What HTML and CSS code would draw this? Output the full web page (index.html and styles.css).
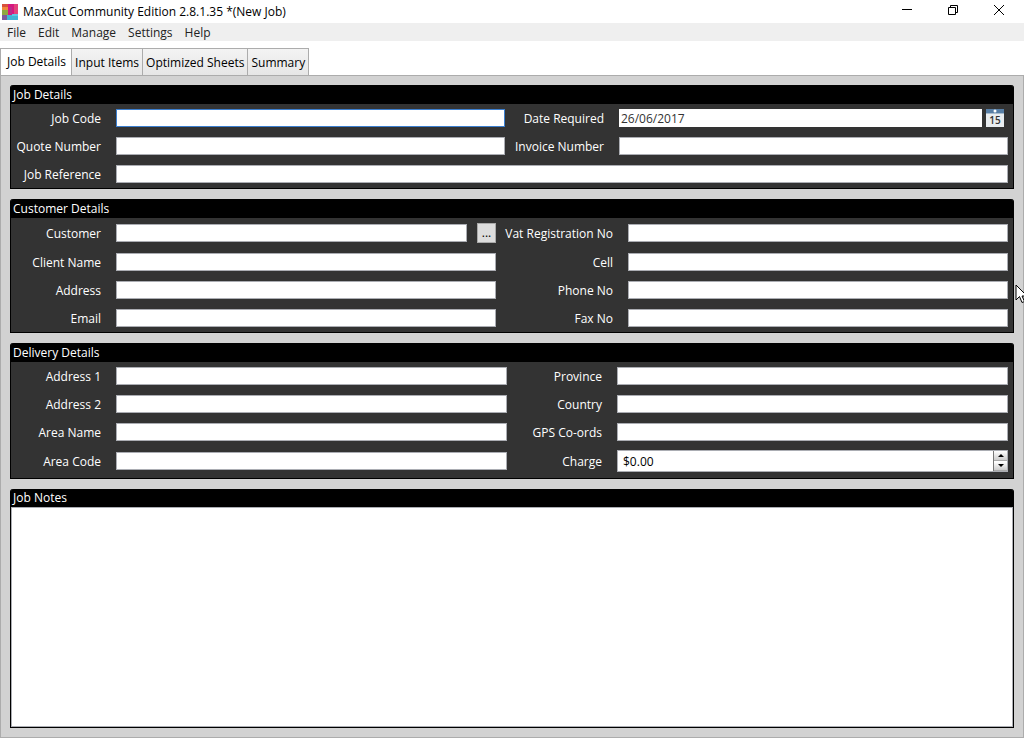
FILE: index.html
```html
<!DOCTYPE html>
<html lang="en">
<head>
  <meta charset="UTF-8">
  <meta name="viewport" content="width=device-width, initial-scale=1.0">
  <title>MaxCut Community Edition</title>
  <link rel="stylesheet" href="styles.css">
</head>
<body>
  <header class="titlebar">
    <svg class="logo" width="16" height="16" viewBox="0 0 16 16">
      <rect width="16" height="16" fill="#d8402f"/>
      <rect width="7" height="3" fill="#d9503c"/>
      <rect y="3" width="7" height="3" fill="#f08a3c"/>
      <rect x="6" width="6" height="11" fill="#d6187f"/>
      <rect x="8" y="3" width="2" height="7" fill="#b5308c"/>
      <rect x="12" width="4" height="10" fill="#e2447c"/>
      <rect y="6" width="6" height="5" fill="#8fa83f"/>
      <rect y="11" width="5" height="5" fill="#7c5a9c"/>
      <rect x="5" y="11" width="11" height="5" fill="#3fb6d6"/>
      <rect x="10" y="10" width="6" height="2" fill="#5fc8e4"/>
    </svg>
    <span class="title">MaxCut Community Edition 2.8.1.35 *(New Job)</span>
    <div class="window-buttons">
      <button aria-label="Minimize"><svg width="12" height="12"><path d="M1 5.500h10" stroke="#000"/></svg></button>
      <button aria-label="Restore"><svg width="12" height="12" fill="none" stroke="#000"><path d="M1.500 3.500h7v7h-7zM3.500 3.500v-2h7v7h-2"/></svg></button>
      <button aria-label="Close"><svg width="12" height="12"><path d="M1 1l10 10M11 1L1 11" stroke="#000"/></svg></button>
    </div>
  </header>

  <nav class="menubar">
    <button>File</button>
    <button>Edit</button>
    <button>Manage</button>
    <button>Settings</button>
    <button>Help</button>
  </nav>

  <div class="tabs" role="tablist">
    <button class="tab active" role="tab" aria-selected="true">Job Details</button>
    <button class="tab" role="tab">Input Items</button>
    <button class="tab" role="tab">Optimized Sheets</button>
    <button class="tab" role="tab">Summary</button>
  </div>

  <main class="content">
    <section class="panel">
      <h2>Job Details</h2>
      <div class="fields job">
        <label for="jobCode">Job Code</label>
        <input type="text" id="jobCode" class="focused">
        <label for="dateRequired">Date Required</label>
        <div class="date">
          <input type="text" id="dateRequired" value="26/06/2017">
          <button class="calendar" aria-label="Pick a date">
            <svg width="20" height="18" viewBox="0 0 20 18">
              <rect x="1" width="18" height="18" fill="#e9edf0"/>
              <rect x="1" width="18" height="4" fill="#587fa6"/>
              <rect x="1" y="4" width="18" height="1" fill="#a9bccd"/>
              <circle cx="10" cy="2" r="1.500" fill="#fff"/>
              <text x="10" y="15" text-anchor="middle">15</text>
            </svg>
          </button>
        </div>
        <label for="quoteNumber">Quote Number</label>
        <input type="text" id="quoteNumber">
        <label for="invoiceNumber">Invoice Number</label>
        <input type="text" id="invoiceNumber">
        <label for="jobReference">Job Reference</label>
        <input type="text" id="jobReference" class="wide">
      </div>
    </section>

    <section class="panel">
      <h2>Customer Details</h2>
      <div class="fields customer">
        <label for="customer">Customer</label>
        <div class="lookup">
          <input type="text" id="customer">
          <button class="browse">...</button>
        </div>
        <label for="vatNo">Vat Registration No</label>
        <input type="text" id="vatNo">
        <label for="clientName">Client Name</label>
        <input type="text" id="clientName">
        <label for="cell">Cell</label>
        <input type="text" id="cell">
        <label for="address">Address</label>
        <input type="text" id="address">
        <label for="phoneNo">Phone No</label>
        <input type="text" id="phoneNo">
        <label for="email">Email</label>
        <input type="text" id="email">
        <label for="faxNo">Fax No</label>
        <input type="text" id="faxNo">
      </div>
    </section>

    <section class="panel">
      <h2>Delivery Details</h2>
      <div class="fields delivery">
        <label for="address1">Address 1</label>
        <input type="text" id="address1">
        <label for="province">Province</label>
        <input type="text" id="province">
        <label for="address2">Address 2</label>
        <input type="text" id="address2">
        <label for="country">Country</label>
        <input type="text" id="country">
        <label for="areaName">Area Name</label>
        <input type="text" id="areaName">
        <label for="gps">GPS Co-ords</label>
        <input type="text" id="gps">
        <label for="areaCode">Area Code</label>
        <input type="text" id="areaCode">
        <label for="charge">Charge</label>
        <div class="spinner">
          <input type="text" id="charge" value="$0.00">
          <div class="steps">
            <button aria-label="Increase"><svg width="6" height="3"><path d="M0 3L3 0L6 3z"/></svg></button>
            <button aria-label="Decrease"><svg width="6" height="3"><path d="M0 0L3 3L6 0z"/></svg></button>
          </div>
        </div>
      </div>
    </section>

    <section class="panel notes">
      <h2><label for="jobNotes">Job Notes</label></h2>
      <textarea id="jobNotes"></textarea>
    </section>
  </main>

  <svg class="cursor" width="13" height="20" viewBox="0 0 13 20">
    <path d="M1 1v15l3.500-3.500 2.500 6 2.500-1-2.500-5.500h5z" fill="#fff" stroke="#000"/>
  </svg>
</body>
</html>
```
FILE: styles.css
```css
* {
  box-sizing: border-box;
}
body {
  margin: 0;
  height: 100vh;
  display: flex;
  flex-direction: column;
  position: relative;
  overflow: hidden;
  background: #fff;
  color: #000;
  font-family: "Open Sans", "Noto Sans", sans-serif;
  font-size: 12px;
  line-height: 16px;
}
button, input, textarea {
  font: inherit;
  color: inherit;
  margin: 0;
  padding: 0;
  border: 0;
  border-radius: 0;
  outline: 0;
}
svg {
  display: block;
}

/* window chrome */
.titlebar {
  display: flex;
  align-items: center;
  height: 23px;
  padding-left: 2px;
}
.title {
  margin-left: 5px;
}
.window-buttons {
  display: flex;
  margin-left: auto;
  padding-right: 2px;
}
.window-buttons button {
  display: flex;
  align-items: center;
  justify-content: center;
  width: 46px;
  height: 23px;
  padding-bottom: 3px;
  background: none;
}
.menubar {
  display: flex;
  gap: 12px;
  height: 18px;
  padding-left: 7px;
  background: #efefef;
  color: #222;
}
.menubar button {
  padding-top: 2px;
  background: none;
}

/* tabs */
.tabs {
  display: flex;
  margin-top: 7px;
  height: 27px;
}
.tab {
  padding: 1px 3px 0;
  border: 1px solid #acacac;
  border-left: 0;
  border-bottom: 0;
  background: linear-gradient(#f3f3f3, #e6e6e6);
}
.tab.active {
  padding: 0 5px 1px 6px;
  border-left: 1px solid #acacac;
  background: #fff;
}

.content {
  flex: 1;
  display: flex;
  flex-direction: column;
  gap: 10px;
  padding: 9px;
  border: 1px solid #acacac;
  background: #d2d2d2;
}

/* panels */
.panel {
  border: 1px solid #000;
  border-top: 0;
  border-radius: 3px 3px 0 0;
  background: #333;
  color: #fff;
}
.panel h2 {
  margin: 0;
  height: 19px;
  padding: 2px 2px 0;
  border-radius: 3px 3px 0 0;
  background: #000;
  font-size: 12px;
  font-weight: normal;
}
.fields {
  display: grid;
  grid-auto-rows: 28px;
  align-items: center;
  column-gap: 15px;
  padding-right: 5px;
}
.fields.job {
  grid-template-columns: 90px 1fr 84px 1fr;
}
.fields.customer {
  grid-template-columns: 90px 1fr 102px 1fr;
  grid-template-rows: 30px;
}
.fields.delivery {
  grid-template-columns: 90px 1fr 80px 1fr;
  grid-template-rows: 28px 28px 28px 30px;
  padding-bottom: 2px;
}
.fields label {
  justify-self: end;
  padding-top: 2px;
  white-space: nowrap;
}
.fields input {
  width: 100%;
  min-width: 0;
  height: 18px;
  padding: 0 2px;
  border: 1px solid #abadb3;
  background: #fff;
  color: #333;
}
.fields .focused {
  border-color: #3c7fcf;
}
.fields .wide {
  grid-column: 2 / -1;
}
.date, .lookup, .spinner {
  display: flex;
  align-items: center;
}
.date {
  gap: 3px;
  padding-right: 3px;
}
.fields .date input {
  border: 0;
}
.calendar {
  background: none;
}
.calendar text {
  font-size: 10px;
  font-weight: 600;
  fill: #333;
}
.lookup {
  gap: 10px;
}
.browse {
  flex: none;
  width: 19px;
  height: 20px;
  border: 1px solid #aaa;
  background: #ddd;
  color: #000;
}
.spinner {
  height: 22px;
  border: 1px solid #abadb3;
  background: #fff;
}
.fields .spinner input {
  padding: 0 5px;
  border: 0;
  color: #000;
}
.steps {
  display: flex;
  flex-direction: column;
  gap: 1px;
  align-self: stretch;
  border-left: 1px solid #777;
}
.steps button {
  flex: 1;
  display: flex;
  align-items: center;
  justify-content: center;
  width: 13px;
  border: 1px solid #aaa;
  border-width: 0 0 1px;
  background: linear-gradient(#fff, #ccc);
}

.notes {
  flex: 1;
  display: flex;
  flex-direction: column;
}
.notes h2 {
  height: 18px;
  padding-top: 1px;
}
.notes textarea {
  flex: 1;
  width: 100%;
  padding: 2px;
  resize: none;
  border: 1px solid #abadb3;
  background: #fff;
  color: #000;
}

.cursor {
  position: absolute;
  top: 284px;
  right: -4px;
}
```
